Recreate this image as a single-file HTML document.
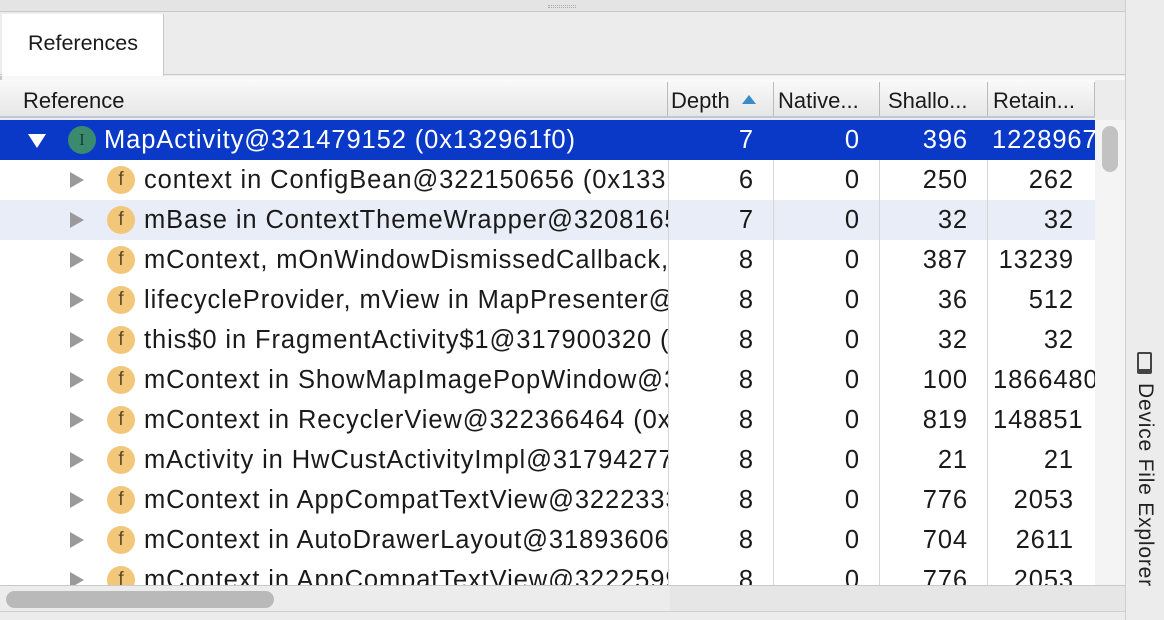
<!DOCTYPE html>
<html><head><style>
*{margin:0;padding:0;box-sizing:border-box}
body{width:1164px;height:620px;overflow:hidden;background:#ececec;font-family:"Liberation Sans",sans-serif;position:relative}
.abs{position:absolute}
.row{position:absolute;left:0;width:1095px;height:40px;font-size:25.5px;letter-spacing:0.9px;color:#1a1a1a}
.row span{position:absolute;top:6px;white-space:nowrap}
.ref{left:0;width:668px;height:40px;overflow:hidden;position:absolute}
.tri{position:absolute;top:12px;width:0;height:0;border-top:8px solid transparent;border-bottom:8px solid transparent;border-left:14px solid #9a9a9a}
.ic{position:absolute;top:6px;width:28px;height:28px;border-radius:50%;background:#f2c77a;color:#5a4a2a;font-size:19px;letter-spacing:0;text-align:center;line-height:27px}
.n{text-align:right}
.vl{position:absolute;top:80px;height:505px;width:1px;background:#d6d6d6}
</style></head><body>
<div class="abs" style="left:0;top:0;width:1125px;height:12px;background:#e4e4e4;border-bottom:1px solid #c9c9c9"></div>
<div class="abs" style="left:548px;top:5px;width:28px;height:3px;border-top:1px dotted #aaa;border-bottom:1px dotted #aaa"></div>
<div class="abs" style="left:0;top:13px;width:1125px;height:62px;background:#ececec;border-bottom:1px solid #c9c9c9"></div>
<div class="abs" style="left:2px;top:14px;width:162px;height:62px;background:#fff;border-right:1px solid #c9c9c9;font-size:21.5px;color:#1a1a1a;padding:17px 0 0 26px">References</div>
<div class="abs" style="left:0;top:76px;width:1125px;height:4px;background:#f7f7f7;border-left:2px solid #c9c9c9"></div>
<div class="abs" style="left:0;top:80px;width:1095px;height:38px;background:linear-gradient(#fafafa,#e6e6e6);border-bottom:2px solid #c0c8d8;font-size:22px;color:#1a1a1a">
<span class="abs" style="left:23px;top:8px">Reference</span>
<span class="abs" style="left:671px;top:8px">Depth</span>
<span class="abs" style="left:742px;top:15px;width:0;height:0;border-left:7px solid transparent;border-right:7px solid transparent;border-bottom:9px solid #3a8cc8"></span>
<span class="abs" style="left:778px;top:8px">Native...</span>
<span class="abs" style="left:888px;top:8px">Shallo...</span>
<span class="abs" style="left:993px;top:8px">Retain...</span>
<div class="abs" style="left:667px;top:2px;width:1px;height:34px;background:#bbb"></div>
<div class="abs" style="left:773px;top:2px;width:1px;height:34px;background:#bbb"></div>
<div class="abs" style="left:879px;top:2px;width:1px;height:34px;background:#bbb"></div>
<div class="abs" style="left:987px;top:2px;width:1px;height:34px;background:#bbb"></div>
<div class="abs" style="left:1094px;top:2px;width:1px;height:34px;background:#bbb"></div>
</div>
<div class="abs" style="left:0;top:120px;width:1095px;height:465px;background:#fff;overflow:hidden">
<div class="abs" style="left:0;top:80px;width:1095px;height:40px;background:#e8edf7"></div>
</div>
<div class="abs" style="left:0;top:120px;width:1095px;height:465px;overflow:hidden">
<div class="row" style="top:0;background:#0a39c8;color:#fff">
<div class="ref"><div class="tri" style="left:28px;top:14px;border:none;border-left:9px solid transparent;border-right:9px solid transparent;border-top:14px solid #fff"></div>
<div class="ic" style="left:68px;background:#3a8a6e;color:#1d3d33;font-family:'Liberation Serif',serif;font-size:17px">I</div>
<span style="left:104px">MapActivity@321479152 (0x132961f0)</span></div>
<span class="n" style="left:668px;width:86px">7</span><span class="n" style="left:774px;width:86px">0</span><span class="n" style="left:880px;width:88px">396</span><span style="left:992px">1228967</span>
</div>
</div>
<div id="rows"></div>
<div class="vl" style="left:668px;top:160px;height:425px"></div>
<div class="vl" style="left:773px;top:160px;height:425px"></div>
<div class="vl" style="left:879px;top:160px;height:425px"></div>
<div class="vl" style="left:987px;top:160px;height:425px"></div>
<div class="abs" style="left:1095px;top:120px;width:30px;height:465px;background:#f4f4f4"></div>
<div class="abs" style="left:1102px;top:126px;width:16px;height:46px;border-radius:8px;background:#c2c2c2"></div>
<div class="abs" style="left:0;top:585px;width:1125px;height:27px;background:#ececec;border-top:1px solid #c9c9c9;border-bottom:1px solid #d0d0d0"></div>
<div class="abs" style="left:670px;top:586px;width:455px;height:25px;background:#e6e6e6"></div>
<div class="abs" style="left:6px;top:591px;width:268px;height:17px;border-radius:9px;background:#b9b9b9"></div>
<div class="abs" style="left:1125px;top:0;width:1px;height:620px;background:#cfcfcf"></div>
<div class="abs" style="left:1137px;top:352px;width:15px;height:22px;border:2px solid #444;border-bottom-width:5px;border-radius:2px"></div>
<div class="abs" style="left:1126px;top:383px;width:38px;height:220px">
<div style="position:absolute;left:31px;top:0;transform-origin:0 0;transform:rotate(90deg);font-size:21px;letter-spacing:0.8px;color:#222;white-space:nowrap">Device File Explorer</div></div>
<script>
var d=[["context in ConfigBean@322150656 (0x133","6","250","262"],["mBase in ContextThemeWrapper@320816598","7","32","32"],["mContext, mOnWindowDismissedCallback, m","8","387","13239"],["lifecycleProvider, mView in MapPresenter@3","8","36","512"],["this$0 in FragmentActivity$1@317900320 (0","8","32","32"],["mContext in ShowMapImagePopWindow@3225","8","100","1866480"],["mContext in RecyclerView@322366464 (0x13","8","819","148851"],["mActivity in HwCustActivityImpl@317942777","8","21","21"],["mContext in AppCompatTextView@322233344","8","776","2053"],["mContext in AutoDrawerLayout@318936064 (","8","704","2611"],["mContext in AppCompatTextView@322259968","8","776","2053"]];
var h='<div class="abs" style="left:0;top:160px;width:1095px;height:425px;overflow:hidden">';
d.forEach(function(r,i){var t=i*40;var rl=(r[3].length>=6)?'<span style="left:993px">'+r[3]+'</span>':'<span class="n" style="left:988px;width:86px">'+r[3]+'</span>';
h+='<div class="row" style="top:'+t+'px"><div class="ref"><div class="tri" style="left:70px"></div><div class="ic" style="left:107px">f</div><span style="left:144px">'+r[0]+'</span></div><span class="n" style="left:668px;width:86px">'+r[1]+'</span><span class="n" style="left:774px;width:86px">0</span><span class="n" style="left:880px;width:88px">'+r[2]+'</span>'+rl+'</div>';});
h+='</div>';document.getElementById('rows').outerHTML=h;
</script>
</body></html>
